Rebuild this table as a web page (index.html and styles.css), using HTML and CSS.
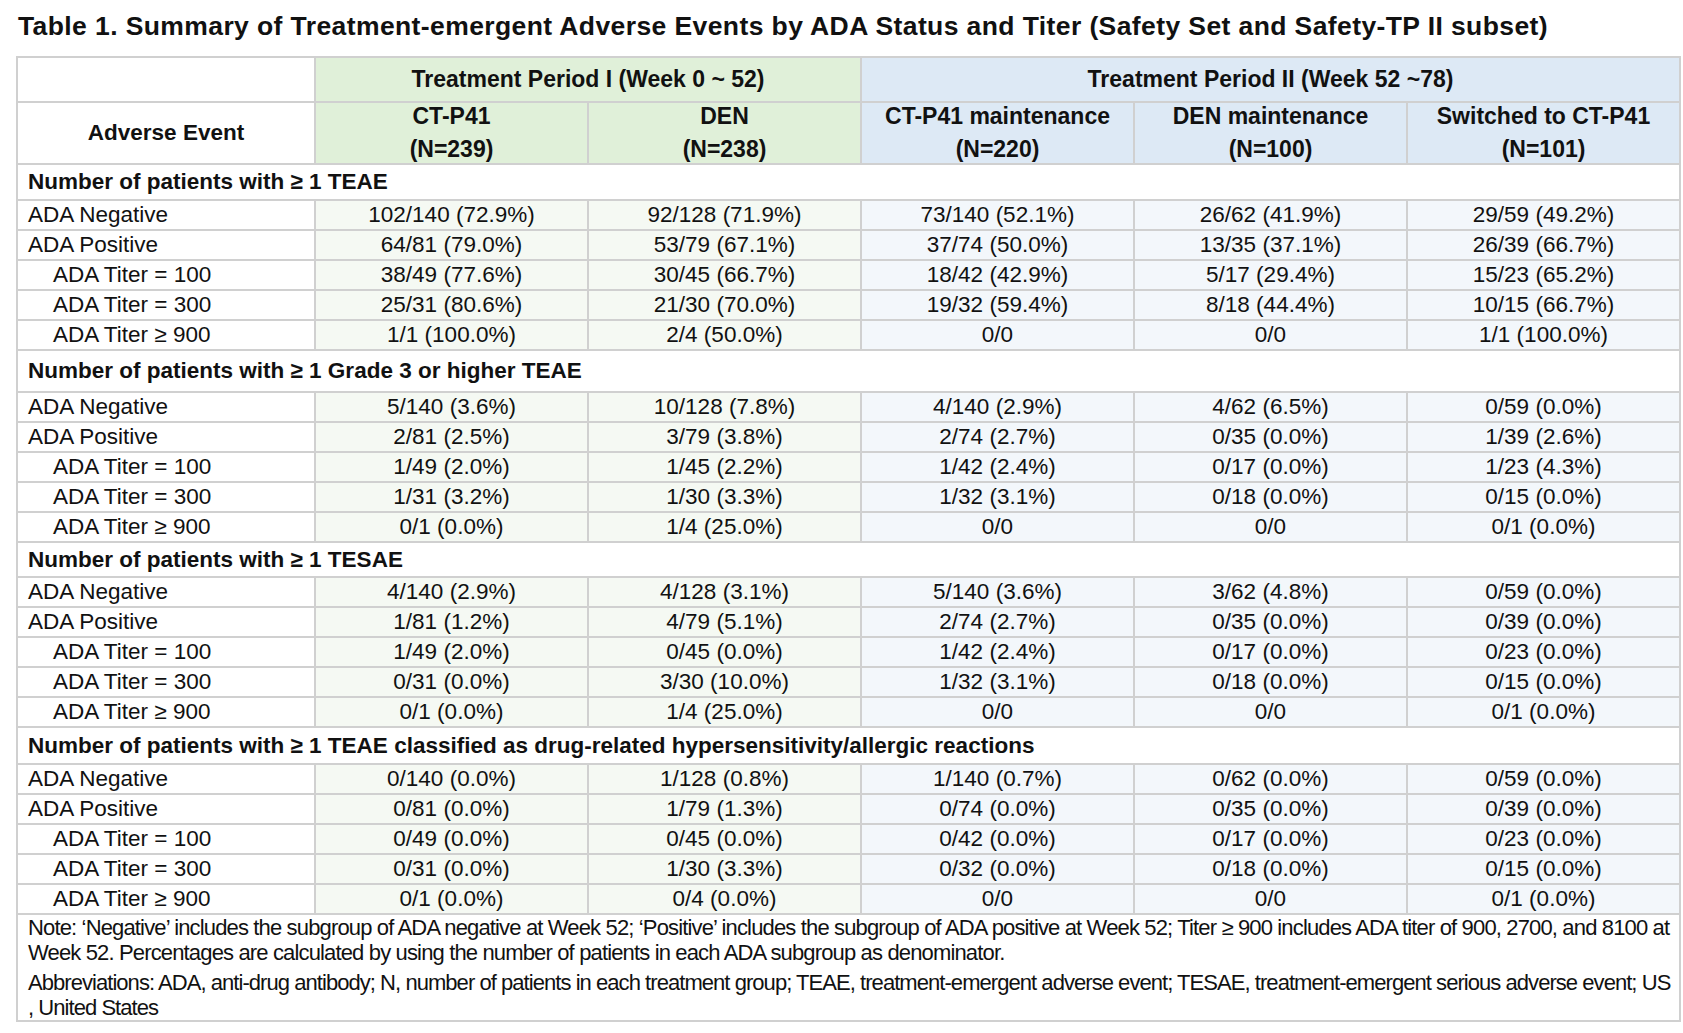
FILE: index.html
```html
<!DOCTYPE html>
<html>
<head>
<meta charset="utf-8">
<link rel="stylesheet" href="styles.css">
</head>
<body>
<div class="page">
  <h1 class="title">Table 1. Summary of Treatment-emergent Adverse Events by ADA Status and Titer (Safety Set and Safety-TP II subset)</h1>
  <table class="ae">
    <colgroup>
      <col class="c-label"><col class="c-data"><col class="c-data"><col class="c-data"><col class="c-data"><col class="c-data">
    </colgroup>
    <thead>
      <tr class="h1">
        <th class="blank"></th>
        <th colspan="2" class="green">Treatment Period I (Week 0 ~ 52)</th>
        <th colspan="3" class="blue">Treatment Period II (Week 52 ~78)</th>
      </tr>
      <tr class="h2">
        <th class="blank">Adverse Event</th>
        <th class="green"><span class="l1">CT-P41</span><span class="l2">(N=239)</span></th>
        <th class="green"><span class="l1">DEN</span><span class="l2">(N=238)</span></th>
        <th class="blue"><span class="l1">CT-P41 maintenance</span><span class="l2">(N=220)</span></th>
        <th class="blue"><span class="l1">DEN maintenance</span><span class="l2">(N=100)</span></th>
        <th class="blue"><span class="l1">Switched to CT-P41</span><span class="l2">(N=101)</span></th>
      </tr>
    </thead>
    <tbody>
      <tr class="sec s1"><td colspan="6">Number of patients with ≥ 1 TEAE</td></tr>
      <tr><td class="lbl">ADA Negative</td><td class="g">102/140 (72.9%)</td><td class="g">92/128 (71.9%)</td><td class="b">73/140 (52.1%)</td><td class="b">26/62 (41.9%)</td><td class="b">29/59 (49.2%)</td></tr>
      <tr><td class="lbl">ADA Positive</td><td class="g">64/81 (79.0%)</td><td class="g">53/79 (67.1%)</td><td class="b">37/74 (50.0%)</td><td class="b">13/35 (37.1%)</td><td class="b">26/39 (66.7%)</td></tr>
      <tr><td class="lbl sub">ADA Titer = 100</td><td class="g">38/49 (77.6%)</td><td class="g">30/45 (66.7%)</td><td class="b">18/42 (42.9%)</td><td class="b">5/17 (29.4%)</td><td class="b">15/23 (65.2%)</td></tr>
      <tr><td class="lbl sub">ADA Titer = 300</td><td class="g">25/31 (80.6%)</td><td class="g">21/30 (70.0%)</td><td class="b">19/32 (59.4%)</td><td class="b">8/18 (44.4%)</td><td class="b">10/15 (66.7%)</td></tr>
      <tr><td class="lbl sub">ADA Titer ≥ 900</td><td class="g">1/1 (100.0%)</td><td class="g">2/4 (50.0%)</td><td class="b">0/0</td><td class="b">0/0</td><td class="b">1/1 (100.0%)</td></tr>

      <tr class="sec s2"><td colspan="6">Number of patients with ≥ 1 Grade 3 or higher TEAE</td></tr>
      <tr><td class="lbl">ADA Negative</td><td class="g">5/140 (3.6%)</td><td class="g">10/128 (7.8%)</td><td class="b">4/140 (2.9%)</td><td class="b">4/62 (6.5%)</td><td class="b">0/59 (0.0%)</td></tr>
      <tr><td class="lbl">ADA Positive</td><td class="g">2/81 (2.5%)</td><td class="g">3/79 (3.8%)</td><td class="b">2/74 (2.7%)</td><td class="b">0/35 (0.0%)</td><td class="b">1/39 (2.6%)</td></tr>
      <tr><td class="lbl sub">ADA Titer = 100</td><td class="g">1/49 (2.0%)</td><td class="g">1/45 (2.2%)</td><td class="b">1/42 (2.4%)</td><td class="b">0/17 (0.0%)</td><td class="b">1/23 (4.3%)</td></tr>
      <tr><td class="lbl sub">ADA Titer = 300</td><td class="g">1/31 (3.2%)</td><td class="g">1/30 (3.3%)</td><td class="b">1/32 (3.1%)</td><td class="b">0/18 (0.0%)</td><td class="b">0/15 (0.0%)</td></tr>
      <tr><td class="lbl sub">ADA Titer ≥ 900</td><td class="g">0/1 (0.0%)</td><td class="g">1/4 (25.0%)</td><td class="b">0/0</td><td class="b">0/0</td><td class="b">0/1 (0.0%)</td></tr>

      <tr class="sec s3"><td colspan="6">Number of patients with ≥ 1 TESAE</td></tr>
      <tr><td class="lbl">ADA Negative</td><td class="g">4/140 (2.9%)</td><td class="g">4/128 (3.1%)</td><td class="b">5/140 (3.6%)</td><td class="b">3/62 (4.8%)</td><td class="b">0/59 (0.0%)</td></tr>
      <tr><td class="lbl">ADA Positive</td><td class="g">1/81 (1.2%)</td><td class="g">4/79 (5.1%)</td><td class="b">2/74 (2.7%)</td><td class="b">0/35 (0.0%)</td><td class="b">0/39 (0.0%)</td></tr>
      <tr><td class="lbl sub">ADA Titer = 100</td><td class="g">1/49 (2.0%)</td><td class="g">0/45 (0.0%)</td><td class="b">1/42 (2.4%)</td><td class="b">0/17 (0.0%)</td><td class="b">0/23 (0.0%)</td></tr>
      <tr><td class="lbl sub">ADA Titer = 300</td><td class="g">0/31 (0.0%)</td><td class="g">3/30 (10.0%)</td><td class="b">1/32 (3.1%)</td><td class="b">0/18 (0.0%)</td><td class="b">0/15 (0.0%)</td></tr>
      <tr><td class="lbl sub">ADA Titer ≥ 900</td><td class="g">0/1 (0.0%)</td><td class="g">1/4 (25.0%)</td><td class="b">0/0</td><td class="b">0/0</td><td class="b">0/1 (0.0%)</td></tr>

      <tr class="sec s4"><td colspan="6">Number of patients with ≥ 1 TEAE classified as drug-related hypersensitivity/allergic reactions</td></tr>
      <tr><td class="lbl">ADA Negative</td><td class="g">0/140 (0.0%)</td><td class="g">1/128 (0.8%)</td><td class="b">1/140 (0.7%)</td><td class="b">0/62 (0.0%)</td><td class="b">0/59 (0.0%)</td></tr>
      <tr><td class="lbl">ADA Positive</td><td class="g">0/81 (0.0%)</td><td class="g">1/79 (1.3%)</td><td class="b">0/74 (0.0%)</td><td class="b">0/35 (0.0%)</td><td class="b">0/39 (0.0%)</td></tr>
      <tr><td class="lbl sub">ADA Titer = 100</td><td class="g">0/49 (0.0%)</td><td class="g">0/45 (0.0%)</td><td class="b">0/42 (0.0%)</td><td class="b">0/17 (0.0%)</td><td class="b">0/23 (0.0%)</td></tr>
      <tr><td class="lbl sub">ADA Titer = 300</td><td class="g">0/31 (0.0%)</td><td class="g">1/30 (3.3%)</td><td class="b">0/32 (0.0%)</td><td class="b">0/18 (0.0%)</td><td class="b">0/15 (0.0%)</td></tr>
      <tr><td class="lbl sub">ADA Titer ≥ 900</td><td class="g">0/1 (0.0%)</td><td class="g">0/4 (0.0%)</td><td class="b">0/0</td><td class="b">0/0</td><td class="b">0/1 (0.0%)</td></tr>

      <tr class="note">
        <td colspan="6">
          <p><span class="ln">Note: ‘Negative’ includes the subgroup of ADA negative at Week 52; ‘Positive’ includes the subgroup of ADA positive at Week 52; Titer ≥ 900 includes ADA titer of 900, 2700, and 8100 at</span><span class="ln">Week 52. Percentages are calculated by using the number of patients in each ADA subgroup as denominator.</span></p>
          <p class="abbr"><span class="ln">Abbreviations: ADA, anti-drug antibody; N, number of patients in each treatment group; TEAE, treatment-emergent adverse event; TESAE, treatment-emergent serious adverse event; US</span><span class="ln">, United States</span></p>
        </td>
      </tr>
    </tbody>
  </table>
</div>
</body>
</html>
```

FILE: styles.css
```css
html, body {
  margin: 0;
  padding: 0;
  background: #ffffff;
}

.page {
  padding: 10px 0 0 16px;
  font-family: "Liberation Sans", Arial, sans-serif;
  color: #111111;
}

.title {
  margin: 0 0 14px 2px;
  font-size: 26.5px;
  line-height: 32px;
  letter-spacing: 0.4px;
  font-weight: 700;
  color: #111111;
  white-space: nowrap;
}

.ae {
  width: 1664px;
  table-layout: fixed;
  border-collapse: collapse;
  font-size: 22.5px;
}

.c-label { width: 298px; }
.c-data { width: 273px; }

.ae th,
.ae td {
  border: 2px solid #d0d0d0;
  padding: 0 10px;
  vertical-align: middle;
}

.ae th {
  font-weight: 700;
  font-size: 23px;
  text-align: center;
}

.h1 { height: 45px; }
.h2 { height: 62px; }
.h2 th { line-height: 30px; }
.h2 th.blank { font-size: 22.5px; }

.l1,
.l2 {
  display: block;
  line-height: 33px;
}

.l1 { margin-top: -3px; }
.l2 { margin-bottom: -3px; }

.blank { background: #ffffff; }
.green { background: #e0f0d9; }
.blue { background: #dde9f5; }

.ae td {
  line-height: 26px;
  white-space: nowrap;
}

.ae td.g {
  background: #f5f9f3;
  text-align: center;
}

.ae td.b {
  background: #f3f7fb;
  text-align: center;
}

.ae td.lbl {
  background: #ffffff;
  text-align: left;
}

.ae td.sub {
  padding-left: 35px;
}

.ae tbody tr { height: 30px; }

.sec td {
  font-weight: 700;
  background: #ffffff;
  text-align: left;
}

.ae tbody tr.s1 { height: 36px; }
.ae tbody tr.s2 { height: 42px; }
.ae tbody tr.s3 { height: 35px; }
.ae tbody tr.s4 { height: 37px; }

.note td {
  padding: 0 10px;
  font-family: "Liberation Sans", Arial, sans-serif;
  font-size: 22px;
  letter-spacing: -0.85px;
  line-height: 25px;
  background: #ffffff;
}

.note p {
  margin: 0;
}

.note p + p {
  margin-top: 5px;
}

.note p.abbr {
  letter-spacing: -0.95px;
}

.ln {
  display: block;
}
```
